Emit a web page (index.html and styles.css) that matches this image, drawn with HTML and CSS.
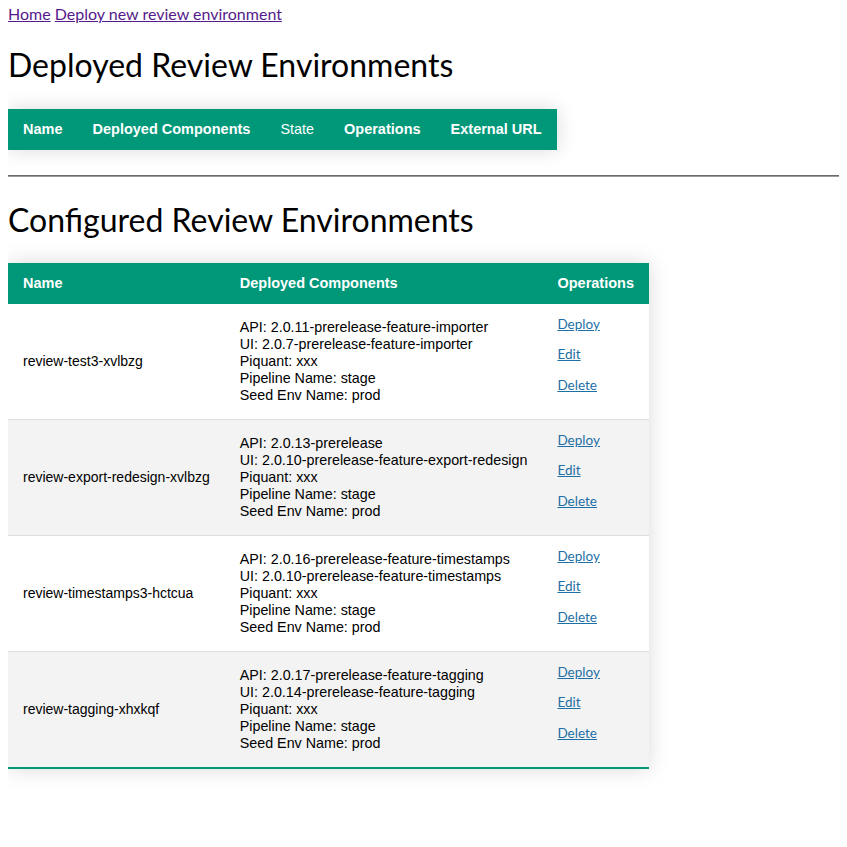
FILE: index.html
```html
<!DOCTYPE html>
<html>
<head>
<meta charset="utf-8">
<link rel="stylesheet" href="styles.css">
</head>
<body>
<nav class="nav"><a href="#" class="nav-link">Home</a> <a href="#" class="nav-link">Deploy new review environment</a></nav>
<h1 class="title title-first">Deployed Review Environments</h1>
<table class="styled-table">
  <thead>
    <tr><th>Name</th><th>Deployed Components</th><td>State</td><th>Operations</th><th>External URL</th></tr>
  </thead>
  <tbody></tbody>
</table>
<hr class="divider">
<h1 class="title title-second">Configured Review Environments</h1>
<table class="styled-table styled-table-second">
  <thead>
    <tr><th>Name</th><th>Deployed Components</th><th>Operations</th></tr>
  </thead>
  <tbody>
    <tr>
      <td class="env-name">review-test3-xvlbzg</td>
      <td class="components">API: 2.0.11-prerelease-feature-importer<br>UI: 2.0.7-prerelease-feature-importer<br>Piquant: xxx<br>Pipeline Name: stage<br>Seed Env Name: prod</td>
      <td><div class="ops"><a href="#" class="op">Deploy</a><a href="#" class="op">Edit</a><a href="#" class="op">Delete</a></div></td>
    </tr>
    <tr>
      <td class="env-name">review-export-redesign-xvlbzg</td>
      <td class="components">API: 2.0.13-prerelease<br>UI: 2.0.10-prerelease-feature-export-redesign<br>Piquant: xxx<br>Pipeline Name: stage<br>Seed Env Name: prod</td>
      <td><div class="ops"><a href="#" class="op">Deploy</a><a href="#" class="op">Edit</a><a href="#" class="op">Delete</a></div></td>
    </tr>
    <tr>
      <td class="env-name">review-timestamps3-hctcua</td>
      <td class="components">API: 2.0.16-prerelease-feature-timestamps<br>UI: 2.0.10-prerelease-feature-timestamps<br>Piquant: xxx<br>Pipeline Name: stage<br>Seed Env Name: prod</td>
      <td><div class="ops"><a href="#" class="op">Deploy</a><a href="#" class="op">Edit</a><a href="#" class="op">Delete</a></div></td>
    </tr>
    <tr>
      <td class="env-name">review-tagging-xhxkqf</td>
      <td class="components">API: 2.0.17-prerelease-feature-tagging<br>UI: 2.0.14-prerelease-feature-tagging<br>Piquant: xxx<br>Pipeline Name: stage<br>Seed Env Name: prod</td>
      <td><div class="ops"><a href="#" class="op">Deploy</a><a href="#" class="op">Edit</a><a href="#" class="op">Delete</a></div></td>
    </tr>
  </tbody>
</table>
</body>
</html>
```
FILE: styles.css
```css
html {
  scrollbar-width: none;
  overflow-x: hidden;
}
html::-webkit-scrollbar {
  display: none;
}
body {
  margin: 8px;
  font-family: Lato, sans-serif;
  background: #fff;
  color: #000;
}
.nav {
  font-size: 16px;
  line-height: 12px;
}
.nav-link {
  color: #551a8b;
}
.title {
  font-size: 32px;
  font-weight: normal;
  margin: 21px 0;
  line-height: 38px;
}
.title-first {
  margin-top: 26px;
}
.title-second {
  margin-top: 24px;
}
.styled-table {
  border-collapse: collapse;
  margin: 25px 0;
  font-size: 14.2px;
  font-family: "Liberation Sans", Arial, sans-serif;
  box-shadow: 0 0 20px rgba(0, 0, 0, 0.15);
}
.styled-table-second {
  margin-top: 24px;
}
.styled-table thead tr {
  background-color: #009879;
  color: #ffffff;
  text-align: left;
}
.styled-table th,
.styled-table td {
  padding: 12px 15px;
  line-height: 17px;
}
.styled-table th {
  font-size: 14.5px;
}
.styled-table thead td {
  font-size: 14.4px;
}
.styled-table .env-name {
  font-size: 14px;
}
.styled-table .components {
  font-size: 14.3px;
}
.styled-table tbody tr {
  border-bottom: 1px solid #dddddd;
}
.styled-table tbody tr:nth-of-type(even) {
  background-color: #f3f3f3;
}
.styled-table tbody tr:last-of-type {
  border-bottom: 2px solid #009879;
}
.divider {
  display: block;
  margin: 0;
  width: calc(100% + 8px);
  box-sizing: border-box;
  border: none;
  border-top: 1px solid #6b6b6b;
  border-bottom: 1px solid #9a9a9a;
  height: 0;
}
.ops {
  display: flex;
  flex-direction: column;
  align-items: flex-start;
}
.op {
  font-family: Lato, sans-serif;
  font-size: 13.5px;
  line-height: 16px;
  color: #1d6fa5;
  margin-bottom: 14.35px;
}
```
